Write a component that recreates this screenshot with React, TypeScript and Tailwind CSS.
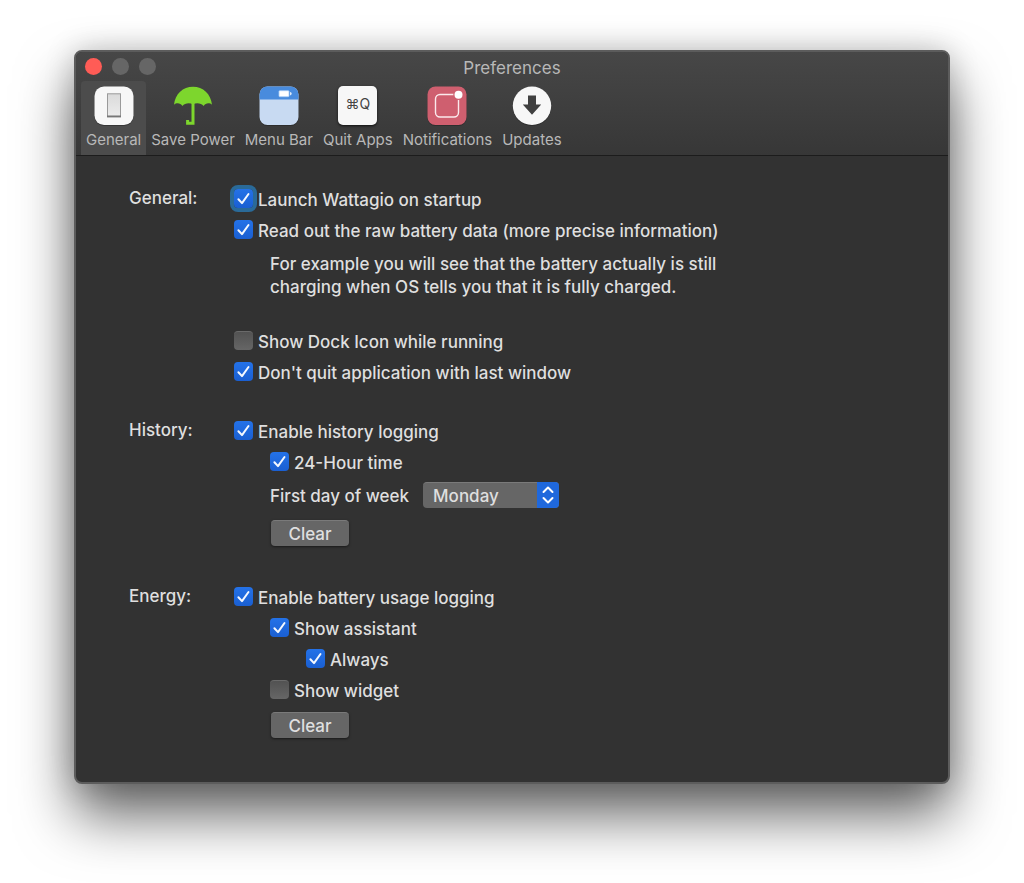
import React, { useState } from 'react';
import clsx from 'clsx';

interface CheckRowProps {
  label: string;
  defaultChecked?: boolean;
  focused?: boolean;
}

const CheckRow: React.FC<CheckRowProps> = ({ label, defaultChecked = false, focused = false }) => {
  const [checked, setChecked] = useState(defaultChecked);

  return (
    <label className="flex h-[31px] items-start gap-[5px] leading-[33px]">
      <span className="mt-[5px] grid shrink-0">
        <input
          type="checkbox"
          checked={checked}
          onChange={(e) => setChecked(e.target.checked)}
          className={clsx(
            'col-start-1 row-start-1 size-[19px] appearance-none rounded outline-none',
            checked
              ? 'bg-linear-to-b from-[#2472e8] to-[#1a5fd2]'
              : 'border-t border-[#6a6a6a] bg-linear-to-b from-[#525252] to-[#666666]',
            focused && 'ring-4 ring-[#2a6a98]'
          )}
        />
        {checked && (
          <svg viewBox="0 0 19 19" className="pointer-events-none col-start-1 row-start-1 size-[19px]" fill="none">
            <path d="M4.4 10.2 8 14.1 14.5 5" stroke="#f4f8ff" strokeWidth="2" strokeLinecap="round" strokeLinejoin="round" />
          </svg>
        )}
      </span>
      {label}
    </label>
  );
};

const ClearButton: React.FC = () => (
  <button
    type="button"
    className="block h-[26px] w-[78px] rounded border-t border-[#7a7a7a] bg-[#666666] leading-6 shadow-sm shadow-black/40"
  >
    Clear
  </button>
);

interface SectionProps {
  title: string;
  children: React.ReactNode;
}

const Section: React.FC<SectionProps> = ({ title, children }) => (
  <section className="flex">
    <h2 className="w-[105px] shrink-0 leading-[29px]">{title}</h2>
    <div className="min-w-0 flex-1">{children}</div>
  </section>
);

const GeneralIcon = () => (
  <svg viewBox="0 0 40 40" className="size-10">
    <defs>
      <linearGradient id="switch" x1="0" y1="0" x2="0" y2="1">
        <stop offset="0" stopColor="#dadada" />
        <stop offset="1" stopColor="#ececec" />
      </linearGradient>
    </defs>
    <rect x="0.5" y="1.5" width="39" height="38.5" rx="9.5" fill="#1f1f1f" opacity="0.5" />
    <rect x="0.5" y="0.5" width="39" height="38.5" rx="9.5" fill="#f7f7f7" />
    <rect x="13.5" y="7.8" width="13" height="23" fill="url(#switch)" stroke="#9a9a9a" />
    <path d="M13 30.3h14" stroke="#777777" strokeWidth="1.8" />
  </svg>
);

const UmbrellaIcon = () => (
  <svg viewBox="0 0 40 40" className="size-10">
    <path
      d="M1 18.8C2 8 10 .8 20 .8S38 8 39 18.8C36.6 16.6 32.6 16.8 30.6 20C28.4 17 23.6 16.4 20 18.2C16.4 16.4 11.6 17 9.4 20C7.4 16.8 3.4 16.6 1 18.8Z"
      fill="#7dd62d"
    />
    <path d="M20 17V37.2H14.6V34" fill="none" stroke="#7dd62d" strokeWidth="3" />
  </svg>
);

const MenuBarIcon = () => (
  <svg viewBox="0 0 40 40" className="size-10">
    <rect x="0.5" y="1.5" width="39" height="38.5" rx="8" fill="#1f1f1f" opacity="0.5" />
    <rect x="0.5" y="0.5" width="39" height="38.5" rx="8" fill="#c8daf2" />
    <path d="M.5 13.5V8.5a8 8 0 0 1 8-8h23a8 8 0 0 1 8 8v5z" fill="#488bdd" />
    <rect x="20" y="4.7" width="10" height="6" rx="0.8" fill="#ffffff" stroke="#a8cbf5" strokeWidth="0.8" />
    <path d="M31.2 6v3.4q1.4-.3 1.4-1.7T31.2 6z" fill="#ffffff" />
  </svg>
);

const QuitIcon = () => (
  <span className="mb-px flex size-[39px] items-center justify-center rounded-[5px] bg-[#f7f7f7] pb-1 font-['Inter','DejaVu_Sans',sans-serif] text-sm text-[#444444] shadow-sm shadow-black/60">
    ⌘Q
  </span>
);

const NotificationsIcon = () => (
  <svg viewBox="0 0 40 40" className="size-10">
    <rect x="0.5" y="1.5" width="39" height="38.5" rx="8" fill="#1f1f1f" opacity="0.5" />
    <rect x="0.5" y="0.5" width="39" height="38.5" rx="8" fill="#cf5f6f" />
    <rect x="8.5" y="8.5" width="23" height="22.5" rx="4.5" fill="none" stroke="#fbe9ec" strokeWidth="1.4" />
    <circle cx="31.5" cy="8.7" r="5.2" fill="#cf5f6f" />
    <circle cx="31.5" cy="8.7" r="4" fill="#ffffff" />
  </svg>
);

const UpdatesIcon = () => (
  <svg viewBox="0 0 40 40" className="size-10">
    <circle cx="20" cy="20.8" r="19.2" fill="#1f1f1f" opacity="0.5" />
    <circle cx="20" cy="19.8" r="19.2" fill="#f7f7f7" />
    <path d="M16 9.5h8v9h5.2L20 28.8 10.8 18.5H16z" fill="#404040" />
  </svg>
);

const tabs = [
  { name: 'General', icon: <GeneralIcon /> },
  { name: 'Save Power', icon: <UmbrellaIcon /> },
  { name: 'Menu Bar', icon: <MenuBarIcon /> },
  { name: 'Quit Apps', icon: <QuitIcon /> },
  { name: 'Notifications', icon: <NotificationsIcon /> },
  { name: 'Updates', icon: <UpdatesIcon /> },
];

export default function App() {
  const [active, setActive] = useState('General');
  const [day, setDay] = useState('Monday');

  return (
    <div className="min-h-screen bg-white px-[74px] pt-[50px] pb-[99px] font-['Inter','Liberation_Sans',sans-serif] text-[17px] leading-6 text-[#dfdfdf]">
      <main className="overflow-hidden rounded-lg border-2 border-[#5c5c5c] bg-[#323232] shadow-[0_32px_56px_rgba(0,0,0,0.6),0_0_30px_rgba(0,0,0,0.2)]">
        <header className="border-b border-[#1c1c1c] bg-linear-to-b from-[#474747] to-[#373737] px-[5px]">
          <div className="grid h-7 grid-cols-[1fr_auto_1fr] items-center px-1">
            <div className="flex gap-2.5">
              <button type="button" aria-label="Close" className="size-[17px] rounded-full bg-[#ff5c56]" />
              <button type="button" aria-label="Minimize" className="size-[17px] rounded-full bg-[#666666]" />
              <button type="button" aria-label="Zoom" className="size-[17px] rounded-full bg-[#666666]" />
            </div>
            <h1 className="pt-1 text-[#b8b8b8]">Preferences</h1>
          </div>
          <nav className="flex pt-px">
            {tabs.map((tab) => (
              <button
                key={tab.name}
                type="button"
                onClick={() => setActive(tab.name)}
                className={clsx(
                  'flex h-[74px] flex-col items-center gap-[3px] rounded-t px-[5px] pt-[5px] text-[15px] leading-[22px] text-[#b8b8b8]',
                  active === tab.name && 'bg-[#4c4c4c]'
                )}
              >
                {tab.icon}
                {tab.name}
              </button>
            ))}
          </nav>
        </header>

        <div className="px-[53px] pt-7 pb-11 font-medium">
          <Section title="General:">
            <CheckRow label="Launch Wattagio on startup" defaultChecked focused />
            <CheckRow label="Read out the raw battery data (more precise information)" defaultChecked />
            <p className="mt-[7px] mb-[27px] max-w-[500px] pl-9 leading-[23px]">
              For example you will see that the battery actually is still
              <br />
              charging when OS tells you that it is fully charged.
            </p>
            <CheckRow label="Show Dock Icon while running" />
            <CheckRow label="Don't quit application with last window" defaultChecked />
          </Section>

          <div className="pt-7">
            <Section title="History:">
              <CheckRow label="Enable history logging" defaultChecked />
              <div className="pl-9">
                <CheckRow label="24-Hour time" defaultChecked />
                <div className="mt-1 mb-3 flex items-end gap-3.5">
                  <label htmlFor="first-day">First day of week</label>
                  <div className="grid">
                    <select
                      id="first-day"
                      value={day}
                      onChange={(e) => setDay(e.target.value)}
                      className="col-start-1 row-start-1 h-[26px] w-[136px] appearance-none rounded border-t border-[#7a7a7a] bg-[#666666] pl-2.5 leading-6 outline-none"
                    >
                      <option>Monday</option>
                      <option>Sunday</option>
                    </select>
                    <span className="pointer-events-none col-start-1 row-start-1 flex w-[22px] items-center justify-center justify-self-end rounded-r bg-[#1f68dc]">
                      <svg viewBox="0 0 22 26" className="h-[26px] w-[22px]" fill="none" stroke="#ffffff" strokeWidth="2" strokeLinecap="round" strokeLinejoin="round">
                        <path d="M6.5 10 11 5.5l4.5 4.5M6.5 16l4.5 4.5 4.5-4.5" />
                      </svg>
                    </span>
                  </div>
                </div>
                <div className="pl-px">
                  <ClearButton />
                </div>
              </div>
            </Section>
          </div>

          <div className="pt-9">
            <Section title="Energy:">
              <CheckRow label="Enable battery usage logging" defaultChecked />
              <div className="pl-9">
                <CheckRow label="Show assistant" defaultChecked />
                <div className="pl-9">
                  <CheckRow label="Always" defaultChecked />
                </div>
                <CheckRow label="Show widget" />
                <div className="pt-1.5 pl-px">
                  <ClearButton />
                </div>
              </div>
            </Section>
          </div>
        </div>
      </main>
    </div>
  );
}
